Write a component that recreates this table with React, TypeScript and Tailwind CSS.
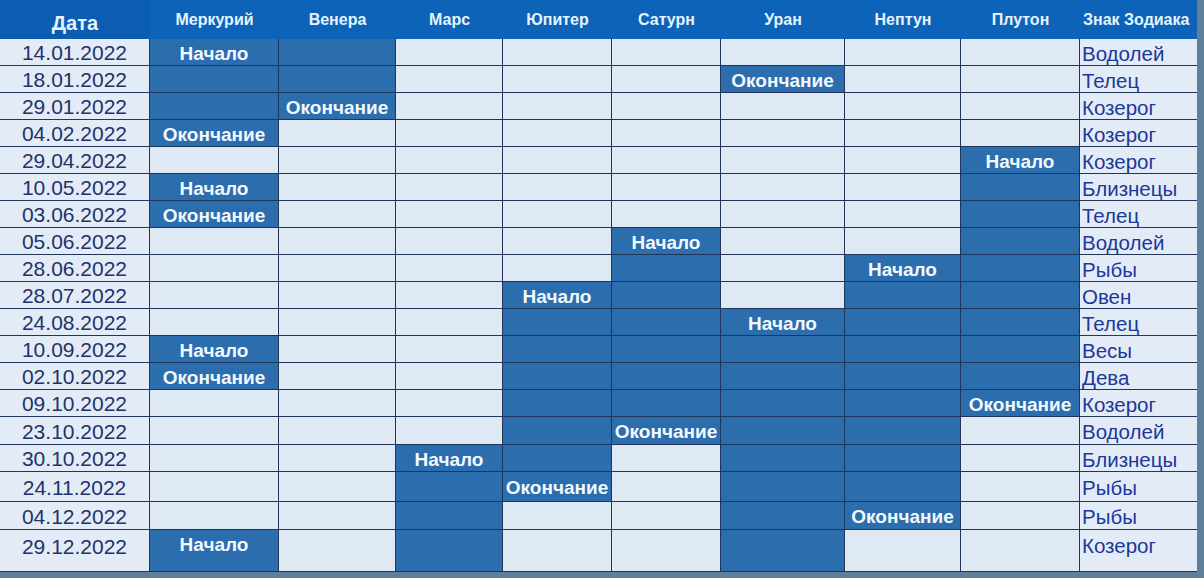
import React from 'react'

type Mark = 0 | 1 | 'Н' | 'О'

interface Row {
  date: string
  sign: string
  cells: Mark[]
  h: string
}

const planets = ['Меркурий', 'Венера', 'Марс', 'Юпитер', 'Сатурн', 'Уран', 'Нептун', 'Плутон']

const rows: Row[] = [
  { date: '14.01.2022', sign: 'Водолей', cells: ['Н', 1, 0, 0, 0, 0, 0, 0], h: 'h-[27px]' },
  { date: '18.01.2022', sign: 'Телец', cells: [1, 1, 0, 0, 0, 'О', 0, 0], h: 'h-[27px]' },
  { date: '29.01.2022', sign: 'Козерог', cells: [1, 'О', 0, 0, 0, 0, 0, 0], h: 'h-[27px]' },
  { date: '04.02.2022', sign: 'Козерог', cells: ['О', 0, 0, 0, 0, 0, 0, 0], h: 'h-[27px]' },
  { date: '29.04.2022', sign: 'Козерог', cells: [0, 0, 0, 0, 0, 0, 0, 'Н'], h: 'h-[27px]' },
  { date: '10.05.2022', sign: 'Близнецы', cells: ['Н', 0, 0, 0, 0, 0, 0, 1], h: 'h-[27px]' },
  { date: '03.06.2022', sign: 'Телец', cells: ['О', 0, 0, 0, 0, 0, 0, 1], h: 'h-[27px]' },
  { date: '05.06.2022', sign: 'Водолей', cells: [0, 0, 0, 0, 'Н', 0, 0, 1], h: 'h-[27px]' },
  { date: '28.06.2022', sign: 'Рыбы', cells: [0, 0, 0, 0, 1, 0, 'Н', 1], h: 'h-[27px]' },
  { date: '28.07.2022', sign: 'Овен', cells: [0, 0, 0, 'Н', 1, 0, 1, 1], h: 'h-[27px]' },
  { date: '24.08.2022', sign: 'Телец', cells: [0, 0, 0, 1, 1, 'Н', 1, 1], h: 'h-[27px]' },
  { date: '10.09.2022', sign: 'Весы', cells: ['Н', 0, 0, 1, 1, 1, 1, 1], h: 'h-[27px]' },
  { date: '02.10.2022', sign: 'Дева', cells: ['О', 0, 0, 1, 1, 1, 1, 1], h: 'h-[27px]' },
  { date: '09.10.2022', sign: 'Козерог', cells: [0, 0, 0, 1, 1, 1, 1, 'О'], h: 'h-[27px]' },
  { date: '23.10.2022', sign: 'Водолей', cells: [0, 0, 0, 1, 'О', 1, 1, 0], h: 'h-[28px]' },
  { date: '30.10.2022', sign: 'Близнецы', cells: [0, 0, 'Н', 1, 0, 1, 1, 0], h: 'h-[27px]' },
  { date: '24.11.2022', sign: 'Рыбы', cells: [0, 0, 1, 'О', 0, 1, 1, 0], h: 'h-[30px]' },
  { date: '04.12.2022', sign: 'Рыбы', cells: [0, 0, 1, 0, 0, 1, 'О', 0], h: 'h-[28px]' },
  { date: '29.12.2022', sign: 'Козерог', cells: ['Н', 0, 1, 0, 0, 1, 0, 0], h: 'h-[42px]' },
]

const widths = ['w-[129px]', 'w-[117px]', 'w-[107px]', 'w-[109px]', 'w-[109px]', 'w-[124px]', 'w-[116px]', 'w-[119px]']

const label: Record<string, string> = { 'Н': 'Начало', 'О': 'Окончание' }

export default function App() {
  return (
    <div
      className="w-[1204px] h-[578px] overflow-hidden bg-[#5f7f9c]"
      style={{ fontFamily: '"Liberation Sans", Arial, sans-serif' }}
    >
      <div className="w-[1197px] flex flex-col">
        <div className="flex h-[39px] bg-[#0c63b8] text-[#e4f3ff] font-bold">
          <div className="w-[150px] bg-[#0a5db0] flex items-end justify-center pb-[1px] text-[20px]">Дата</div>
          {planets.map((p, i) => (
            <div key={p} className={`${widths[i]} flex items-center justify-center pt-[1px] text-[16px]`}>
              {p}
            </div>
          ))}
          <div className="flex-1 flex items-center pl-[3px] pt-[1px] text-[16px]">Знак Зодиака</div>
        </div>

        {rows.map((r, ri) => {
          const last = ri === rows.length - 1
          return (
            <div key={ri} className={`flex ${r.h}`}>
              <div
                className={`w-[150px] border-r border-b border-[#22365a] bg-[#e3ecf6] text-[#1f3269] text-[21px] flex justify-center ${last ? 'items-start pt-[1px]' : 'items-center pt-[2px]'}`}
              >
                {r.date}
              </div>
              {r.cells.map((c, ci) => {
                const filled = c !== 0
                return (
                  <div
                    key={ci}
                    className={`${widths[ci]} border-r border-b border-[#1f3559] flex justify-center font-bold text-[19px] text-[#f2f9ff] ${filled ? 'bg-[#2c6dae]' : 'bg-[#dfe9f4]'} ${last ? 'items-start pt-[1px]' : 'items-center pt-[4px]'}`}
                  >
                    {typeof c === 'string' ? label[c] : null}
                  </div>
                )
              })}
              <div
                className={`flex-1 border-b border-[#22365a] bg-[#e3ecf6] text-[#1b389a] text-[20.5px] flex pl-[2px] ${last ? 'items-start pt-[1px]' : 'items-center pt-[4px]'}`}
              >
                {r.sign}
              </div>
            </div>
          )
        })}
      </div>
    </div>
  )
}
